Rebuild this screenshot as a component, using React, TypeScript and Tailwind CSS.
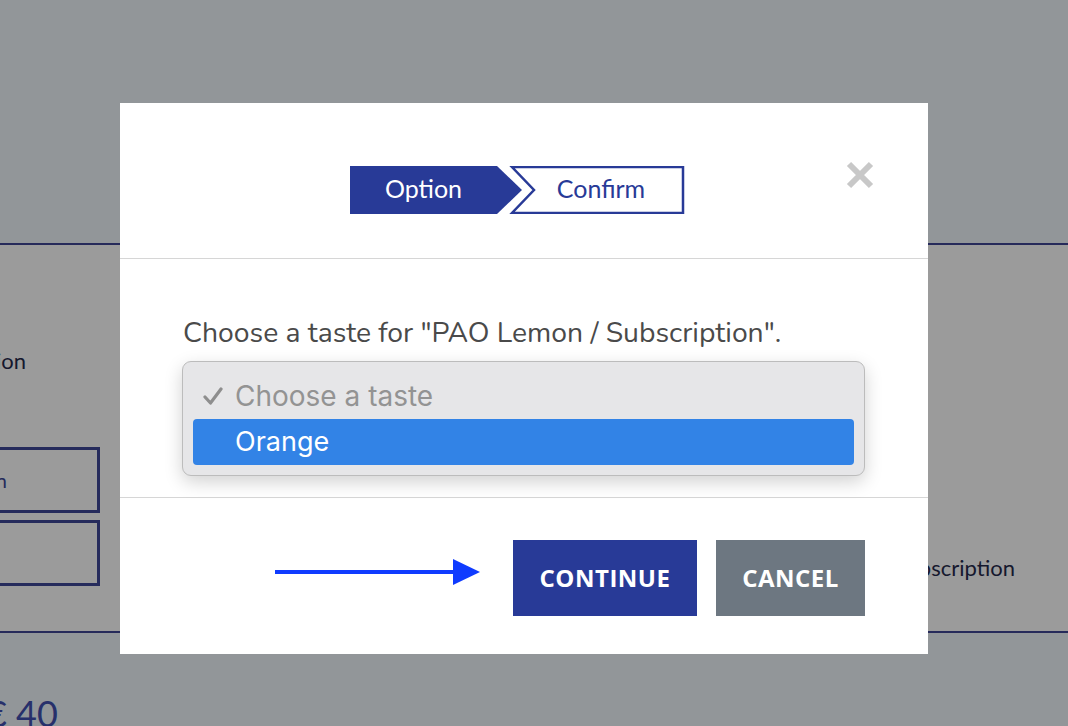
import React from "react";

export default function App() {
  return (
    <div className="relative w-[1068px] h-[726px] overflow-hidden flex flex-col" style={{ fontFamily: "Lato, 'Open Sans', sans-serif" }}>
      {/* background page */}
      <div className="h-[243px] bg-[#929699]" />
      <div className="h-[2px] bg-[#262a5a]" />
      <div className="h-[386px] bg-[#9b9b9b] flex">
        <div className="flex flex-col -ml-[150px] w-[250px]">
          <div className="pt-[99px] h-[202px] text-[22px] text-[#15182e] text-right pr-[74px]">Option</div>
          <div className="h-[66px] border-[3px] border-[#262b5c] flex items-center justify-end pr-[90px] text-[20px] text-[#262b5c]">Plan</div>
          <div className="mt-[7px] h-[66px] border-[3px] border-[#262b5c]" />
        </div>
        <div className="flex-1 flex justify-end items-start pt-[306px] pr-[53px]">
          <span className="text-[22px] text-[#15182e]">Subscription</span>
        </div>
      </div>
      <div className="h-[2px] bg-[#262a5a]" />
      <div className="flex-1 bg-[#929699] flex items-end">
        <span className="-ml-[14px] text-[36px] leading-none text-[#27306b] translate-y-[5px]">€ 40</span>
      </div>

      {/* modal */}
      <div className="absolute left-[120px] top-[103px] w-[808px] h-[551px] bg-white flex flex-col">
        <div className="h-[156px] border-b border-[#d6d6d6] relative flex justify-center pt-[63px]">
          <div className="relative w-[335px] h-[48px] ml-[-14px]">
            <svg className="absolute inset-0" width="335" height="48" viewBox="0 0 335 48">
              <polygon points="0,0 147,0 172,24 147,48 0,48" fill="#283a97" />
              <polygon points="162,1 333,1 333,47 162,47 184,24" fill="none" stroke="#283a97" strokeWidth="2.5" />
            </svg>
            <div className="absolute inset-0 flex items-center text-[25px] leading-none pb-[3px]">
              <span className="w-[148px] text-center text-white">Option</span>
              <span className="flex-1 text-center text-[#283a97] pl-[20px]">Confirm</span>
            </div>
          </div>
          <svg className="absolute left-[725px] top-[57px]" width="30" height="30" viewBox="0 0 30 30">
            <path d="M4 4 L26 26 M26 4 L4 26" stroke="#c8c8c8" strokeWidth="6" />
          </svg>
        </div>

        <div className="h-[239px] border-b border-[#d6d6d6] px-[63px] pt-[58px] relative">
          <div className="text-[28.3px] leading-[32px] text-[#4a4a4a]" style={{ fontFamily: "'Nunito', Lato, sans-serif" }}>
            Choose a taste for "PAO Lemon / Subscription".
          </div>
          {/* native select beneath */}
          <div className="mt-[22px] h-[80px] rounded-[4px] border border-[#c8c8c8] border-r-[3px] border-r-[#3b82f6] bg-white" />
          {/* open popup */}
          <div className="absolute left-[62px] top-[102px] w-[683px] h-[115px] rounded-[9px] border border-[#bcbcbc] bg-[#e6e6e8] shadow-[0_6px_18px_rgba(0,0,0,0.18)] px-[10px] pt-[14px]" style={{ fontFamily: "Inter, Roboto, sans-serif" }}>
            <div className="flex items-center h-[40px] text-[28px] text-[#939393]">
              <span className="w-[42px] pl-[10px] flex items-center">
                <svg width="20" height="20" viewBox="0 0 20 20">
                  <path d="M2 11 L7.5 17 L18 3" fill="none" stroke="#8e8e8e" strokeWidth="3.2" strokeLinecap="round" strokeLinejoin="round" />
                </svg>
              </span>
              <span>Choose a taste</span>
            </div>
            <div className="mt-[3px] h-[46px] rounded-[4px] bg-[#3283e6] flex items-center pl-[42px] text-[27px] text-white">
              Orange
            </div>
          </div>
        </div>

        <div className="flex-1 flex items-start justify-end pt-[42px] pr-[63px]" style={{ fontFamily: "'Open Sans', sans-serif" }}>
          <svg className="mt-[18px] mr-[33px]" width="205" height="28" viewBox="0 0 205 28">
            <rect x="0" y="12" width="182" height="4" fill="#0f3bff" />
            <polygon points="178,1 205,14 178,27" fill="#0f3bff" />
          </svg>
          <button className="w-[184px] h-[76px] bg-[#283a97] text-white text-[24px] font-bold tracking-[0.5px]">CONTINUE</button>
          <button className="ml-[19px] w-[149px] h-[76px] bg-[#6d7781] text-white text-[24px] font-bold tracking-[0.5px]">CANCEL</button>
        </div>
      </div>
    </div>
  );
}
